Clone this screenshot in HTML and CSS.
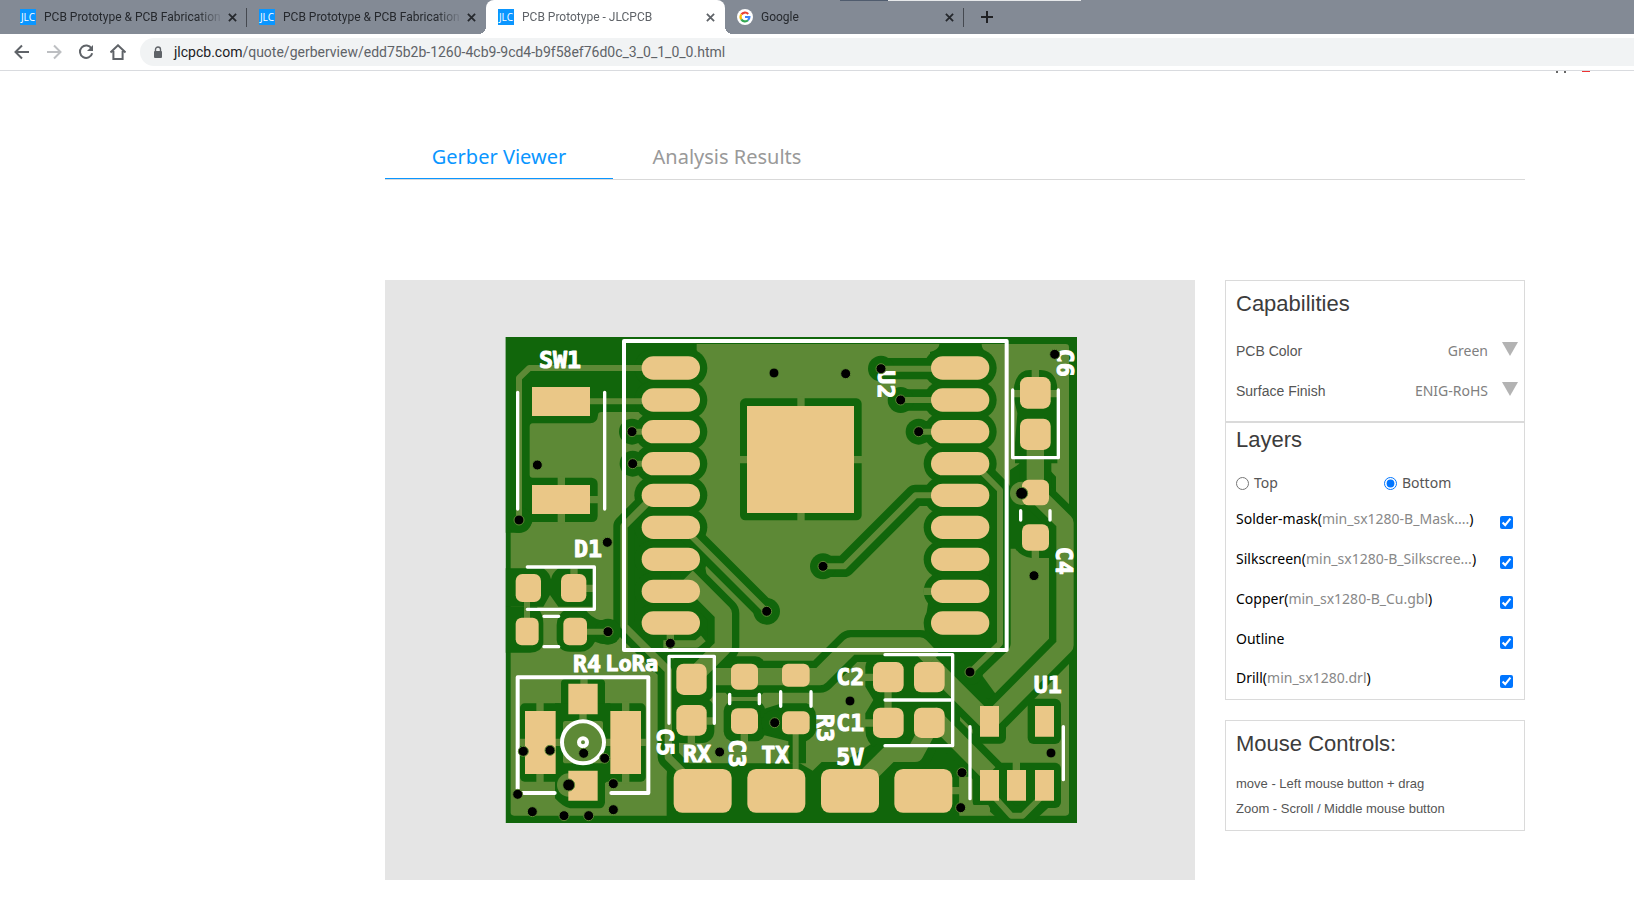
FILE: index.html
```html
<!DOCTYPE html>
<html lang="en">
<head>
<meta charset="utf-8">
<title>PCB Prototype - JLCPCB</title>
<link rel="stylesheet" href="styles.css">
</head>
<body>
<header class="browser">
  <div class="window-strip"></div>
  <nav class="tabstrip">
    <div class="tab"><span class="favicon">JLC</span><span class="tab-title">PCB Prototype &amp; PCB Fabrication</span><button class="tab-close" aria-label="Close tab"><svg viewBox="0 0 10 10"><path d="M1 1l8 8M9 1l-8 8"/></svg></button></div>
    <div class="tab"><span class="favicon">JLC</span><span class="tab-title">PCB Prototype &amp; PCB Fabrication</span><button class="tab-close" aria-label="Close tab"><svg viewBox="0 0 10 10"><path d="M1 1l8 8M9 1l-8 8"/></svg></button></div>
    <div class="tab active"><span class="favicon">JLC</span><span class="tab-title">PCB Prototype - JLCPCB</span><button class="tab-close" aria-label="Close tab"><svg viewBox="0 0 10 10"><path d="M1 1l8 8M9 1l-8 8"/></svg></button></div>
    <div class="tab">
      <svg class="google" viewBox="0 0 16 16"><circle cx="8" cy="8" r="8" fill="#fff"/><g fill="none" stroke-width="2.2"><path d="M4.4 5.4A4.4 4.4 0 0 1 11.2 4.9" stroke="#ea4335"/><path d="M4.3 10.4A4.5 4.5 0 0 1 4.3 5.5" stroke="#fbbc05"/><path d="M11 11.2A4.4 4.4 0 0 1 4.3 10.3" stroke="#34a853"/><path d="M8 8H12.4A4.4 4.4 0 0 1 10.9 11.2" stroke="#4285f4"/></g></svg>
      <span class="tab-title">Google</span><button class="tab-close" aria-label="Close tab"><svg viewBox="0 0 10 10"><path d="M1 1l8 8M9 1l-8 8"/></svg></button></div>
    <button class="new-tab" aria-label="New tab"><svg viewBox="0 0 12 12"><path d="M6 0v12M0 6h12"/></svg></button>
  </nav>
  <div class="toolbar">
    <button class="nav-button" aria-label="Back"><svg viewBox="0 0 16 16"><path d="M15 8H2M8 1.500L1.500 8L8 14.500"/></svg></button>
    <button class="nav-button disabled" aria-label="Forward"><svg viewBox="0 0 16 16"><path d="M1 8h13M8 1.500L14.500 8L8 14.500"/></svg></button>
    <button class="nav-button" aria-label="Reload"><svg viewBox="0 0 16 16"><path d="M13.500 4.500A6.200 6.200 0 1 0 14.200 9.200"/><path d="M15 1v6H9z" class="solid"/></svg></button>
    <button class="nav-button" aria-label="Home"><svg viewBox="0 0 16 16"><path d="M0.500 8.500L8 1.300L15.500 8.500M3.400 7V15H12.600V7"/></svg></button>
    <div class="address">
      <svg class="lock" viewBox="0 0 10 13"><path d="M2.500 6V3.500a2.500 2.500 0 0 1 5 0V6" fill="none" stroke="#5f6368" stroke-width="1.400"/><rect x="1" y="5" width="8" height="7" rx="1" fill="#5f6368"/></svg>
      <span class="url"><span class="host">jlcpcb.com</span>/quote/gerberview/edd75b2b-1260-4cb9-9cd4-b9f58ef76d0c_3_0_1_0_0.html</span>
    </div>
  </div>
</header>
<div class="remnants"><i class="dot"></i><i class="dot"></i><i class="badge"></i></div>

<main class="page">
  <nav class="view-tabs">
    <a class="view-tab current" href="#viewer">Gerber Viewer</a>
    <a class="view-tab" href="#analysis">Analysis Results</a>
  </nav>
  <div class="workspace">
    <section class="viewer" id="viewer">
      <svg class="board" viewBox="-345 -150 2430 1800" role="img" aria-label="Bottom side of the board">
        <defs>
          <g id="pad"><path d="M35 0H140"/></g>
          <clipPath id="edge"><rect x="17" y="21" width="1714" height="1458"/></clipPath>
        </defs>
        <g clip-path="url(#edge)">
          <rect class="mask" x="16" y="20" width="1716" height="1460"/>
          <rect class="copper" x="32" y="42" width="1675" height="1415" rx="10"/>

          <!-- clearance areas -->
          <g class="mask">
            <path d="M16 20H590V246H305Q294 246 294 256Q292 280 270 280H98Q89 281 89 290V434Q89 443 98 443H275Q293 445 293 462V558Q292 576 275 576H97Q84 608 50 608H16Z"/>
            <path d="M580 20V50Q580 60 592 62V90H480V20Z"/>
            <path d="M1318 20V44Q1316 58 1290 66V110H1460V66Q1446 58 1445 44V20Z"/>
            <path d="M385 560H600V620L645 880V940L600 985H460L385 900Z"/>
            <path d="M1330 520H1510V950L1410 1050L1450 1100L1385 1120L1270 960L1275 880Z"/>
            <rect x="720" y="205" width="365" height="366" rx="16"/>
            <path d="M1540 200Q1540 120 1590 120H1622Q1672 122 1672 180V400H1545V340L1552 250Z"/>
            <path d="M1530 420L1560 400H1630L1668 440V684H1595Q1562 680 1546 656H1530Z"/>
            <path d="M16 715H130Q150 730 153 748Q156 730 175 715H283V830H175L150 795L130 830H16Z"/>
            <path d="M16 830H110Q130 850 130 880V940Q125 968 90 968H16ZM170 885Q172 850 200 838H255Q275 865 300 870H350V935Q320 950 285 935Q270 965 240 965H210Q175 965 170 930Z"/>
            <rect x="183" y="1048" width="132" height="90" rx="12"/>
            <rect x="60" y="1120" width="130" height="235" rx="14"/>
            <rect x="308" y="1120" width="129" height="235" rx="14"/>
            <path d="M165 1120H331V1345L315 1360V1418Q312 1435 298 1435H210Q190 1432 165 1405Z"/>
            <rect x="507" y="979" width="136" height="138" rx="36"/>
            <rect x="507" y="1103" width="136" height="136" rx="36"/>
            <path d="M507 1010H530V1280H505Z"/>
            <rect x="671" y="979" width="125" height="122" rx="30"/>
            <rect x="671" y="1113" width="125" height="121" rx="30"/>
            <path d="M780 1140L846 1120H920Q948 1130 948 1160V1200Q945 1220 918 1234V1300H865V1234L790 1215Z"/>
            <path d="M502 1300H900L938 1322L965 1296H1030L1140 1225V1200H1370L1440 1290L1378 1340V1480H500V1340Z"/>
            <path d="M1096 1010Q1100 975 1140 974H1380V1260H1130Q1096 1235 1096 1200V1150L1120 1110L1096 1070Z"/>
            <path d="M1380 960L1420 1000L1500 1110L1440 1150L1360 1060Z"/>
            <path d="M1370 1200L1440 1270L1430 1340L1378 1340Z"/>
            <rect x="1418" y="1106" width="100" height="135" rx="18"/>
            <rect x="1583" y="1106" width="100" height="136" rx="18"/>
            <rect x="1418" y="1298" width="265" height="136" rx="18"/>
          </g>

          <!-- rounded clearance around pads and traces -->
          <g class="halo-lines">
            <g class="pad-halo">
              <use href="#pad" x="425" y="114"/><use href="#pad" x="425" y="210"/><use href="#pad" x="425" y="305"/><use href="#pad" x="425" y="401"/><use href="#pad" x="425" y="496"/><use href="#pad" x="425" y="592"/><use href="#pad" x="425" y="688"/><use href="#pad" x="425" y="784"/><use href="#pad" x="425" y="879"/>
              <use href="#pad" x="1293" y="114"/><use href="#pad" x="1293" y="210"/><use href="#pad" x="1293" y="305"/><use href="#pad" x="1293" y="401"/><use href="#pad" x="1293" y="496"/><use href="#pad" x="1293" y="592"/><use href="#pad" x="1293" y="688"/><use href="#pad" x="1293" y="784"/><use href="#pad" x="1293" y="879"/>
            </g>
            <g class="trace-halo">
              <path d="M450 510L372 588V888L505 1021V1282L560 1337"/>
              <path d="M575 619L800 844M396 305H450M398 401H450"/>
              <path d="M1143 116H1310M1202 210H1310M1256 305H1310M1310 496H1246L1033 709H969"/>
              <path d="M1445 425L1500 480V940L1410 1027"/>
              <path d="M1468 1400L1533 1459H1570L1640 1395"/>
            </g>
            <g class="band-halo">
              <path d="M560 740L670 850V950L600 1020M620 1040H960L1052 948H1260L1300 990"/>
              <path d="M1606 380V490L1695 578V946L1468 1175"/>
              <path d="M1300 1012L1468 1180M1290 1150L1468 1330M1288 1190L1250 1270H1170L1100 1340"/>
            </g>
          </g>
          <g class="mask">
            <circle cx="57" cy="570" r="39"/><circle cx="396" cy="305" r="39"/><circle cx="398" cy="401" r="39"/><circle cx="324" cy="905" r="39"/><circle cx="800" cy="844" r="40"/><circle cx="1143" cy="116" r="39"/><circle cx="1202" cy="210" r="39"/><circle cx="1256" cy="305" r="39"/><circle cx="969" cy="709" r="39"/><circle cx="1410" cy="1026" r="39"/><circle cx="824" cy="1178" r="39"/>
          </g>

          <!-- copper traces -->
          <g class="traces">
            <path class="w18" d="M440 114H88L57 144V570M270 214H440M81 800V880"/>
            <path d="M184 440V470M184 548V580M265 509H297"/>
            <path d="M450 510L372 588V888L505 1021V1282L560 1337"/>
            <path class="w18" d="M575 619L800 844M396 305H450M398 401H450M255 905H324M887 1200V1330"/>
            <path class="w18" d="M1143 116H1310M1202 210H1310M1256 305H1310M1310 496H1246L1033 709H969"/>
            <path class="w18" d="M1445 425L1500 480V940L1410 1027"/>
            <path d="M716 389H745M1058 389H1090M903 200V230M903 545V575"/>
            <path d="M1606 118V150M1536 191H1565M1645 191H1680M1606 650V690M1270 784H1300"/>
            <path class="band" d="M560 740L670 850V950L600 1020M640 1040H960L1052 948H1260L1300 990"/>
            <path class="band" d="M1606 350V490L1695 578V946L1468 1175"/>
            <path class="band" d="M1288 1000L1468 1180M1290 1150L1468 1330M1288 1190L1245 1270H1170L1100 1340"/>
            <path d="M1090 1042H1125M1090 1179H1125M1164 1080V1140M1350 1382H1388M1549 1290V1330"/>
            <path class="w18" d="M1478 1395L1534 1457H1568L1630 1395"/>
            <path d="M222 708V740M255 775H290M511 910V940M490 942H590L610 925"/>
            <path d="M620 1173H650M574 1210V1245M733 1200V1245"/>
            <path d="M120 1115V1150M120 1330V1360M377 1115V1150M377 1330V1360M252 1045V1070M249 1150V1185M165 1237H195M305 1237H335M56 1237H80M420 1237H442"/>
          </g>
          <g class="copper">
            <rect x="189" y="1173" width="120" height="127" rx="6"/>
            <circle cx="206" cy="1365" r="35"/><circle cx="1565" cy="490" r="35"/>
            <path d="M1378 1345Q1378 1328 1395 1328Q1402 1340 1402 1425H1465Q1476 1440 1465 1456H1385Q1378 1456 1378 1448Z"/>
          </g>

          <!-- exposed pads -->
          <g class="castellated">
            <use href="#pad" x="425" y="114"/><use href="#pad" x="425" y="210"/><use href="#pad" x="425" y="305"/><use href="#pad" x="425" y="401"/><use href="#pad" x="425" y="496"/><use href="#pad" x="425" y="592"/><use href="#pad" x="425" y="688"/><use href="#pad" x="425" y="784"/><use href="#pad" x="425" y="879"/>
            <use href="#pad" x="1293" y="114"/><use href="#pad" x="1293" y="210"/><use href="#pad" x="1293" y="305"/><use href="#pad" x="1293" y="401"/><use href="#pad" x="1293" y="496"/><use href="#pad" x="1293" y="592"/><use href="#pad" x="1293" y="688"/><use href="#pad" x="1293" y="784"/><use href="#pad" x="1293" y="879"/>
          </g>
          <g class="gold">
            <path d="M741 228H1062V549H741ZM96 171H270V258H96ZM96 465H270V552H96Z"/>
            <path d="M205 1061H293V1153H205ZM75 1143H167V1332H75ZM331 1143H423V1332H331ZM205 1322H293V1412H205Z"/>
            <path d="M1440 1128H1497V1220H1440ZM1605 1128H1662V1220H1605ZM1440 1320H1497V1412H1440ZM1521 1320H1578V1412H1521ZM1605 1320H1662V1412H1605Z"/>
            <rect x="1560" y="141" width="92" height="95" rx="22"/><rect x="1560" y="266" width="92" height="94" rx="22"/>
            <rect x="1566" y="449" width="81" height="77" rx="20"/><rect x="1566" y="583" width="81" height="79" rx="20"/>
            <rect x="47" y="732" width="76" height="84" rx="20"/><rect x="183" y="732" width="76" height="84" rx="20"/>
            <rect x="47" y="863" width="69" height="83" rx="18"/><rect x="190" y="863" width="71" height="83" rx="18"/>
            <rect x="529" y="1001" width="91" height="94" rx="22"/><rect x="529" y="1125" width="91" height="92" rx="22"/>
            <rect x="693" y="1001" width="81" height="78" rx="20"/><rect x="693" y="1135" width="81" height="77" rx="20"/>
            <rect x="846" y="1001" width="83" height="69" rx="18"/><rect x="846" y="1144" width="83" height="69" rx="18"/>
            <rect x="1119" y="996" width="92" height="91" rx="22"/><rect x="1242" y="996" width="92" height="91" rx="22"/>
            <rect x="1119" y="1133" width="92" height="91" rx="22"/><rect x="1242" y="1133" width="92" height="91" rx="22"/>
            <rect x="521" y="1317" width="174" height="131" rx="26"/><rect x="742" y="1317" width="174" height="131" rx="26"/><rect x="963" y="1317" width="174" height="131" rx="26"/><rect x="1183" y="1317" width="174" height="131" rx="26"/>
          </g>

          <!-- silkscreen -->
          <g class="silk">
            <path class="thick" d="M372 33H1520V960H372Z"/>
            <path d="M53 187V537M314 187V537M82 711H283V838H82M132 859H176M132 950H176"/>
            <path class="thick" d="M164 1389H53V1042H445V1389H334"/>
            <circle class="thick" cx="249" cy="1237" r="63"/><circle class="thick" cx="249" cy="1237" r="12"/>
            <path d="M507 1180V979H643V1180M689 1093V1121M778 1093V1121M842 1085V1129M933 1085V1129"/>
            <path d="M1155 974H1358V1247H1155M1155 1110H1358M1538 180V383H1675V180M1562 542V570M1650 542V570M1410 1190V1406M1690 1190V1349"/>
          </g>
          <g class="legend">
            <text x="117" y="115">SW1</text><text x="222" y="681">D1</text><text x="219" y="1027">R4</text><text class="name" x="316" y="1022">LoRa</text>
            <text x="549" y="1297">RX</text><text x="784" y="1300">TX</text><text x="1009" y="1306">5V</text><text x="1009" y="1066">C2</text><text x="1009" y="1203">C1</text><text x="1601" y="1088">U1</text>
            <text transform="translate(1133 121) rotate(90)">U2</text><text transform="translate(1670 56) rotate(90)">C6</text><text transform="translate(1668 650) rotate(90)">C4</text>
            <text transform="translate(471 1194) rotate(90)">C5</text><text transform="translate(686 1228) rotate(90)">C3</text><text transform="translate(951 1152) rotate(90)">R3</text>
          </g>

          <!-- drill holes -->
          <g class="holes">
            <circle cx="822" cy="129" r="15"/><circle cx="396" cy="305" r="15"/><circle cx="398" cy="401" r="15"/><circle cx="112" cy="405" r="15"/><circle cx="57" cy="570" r="15"/><circle cx="322" cy="637" r="15"/>
            <circle cx="1037" cy="131" r="15"/><circle cx="1143" cy="116" r="15"/><circle cx="1202" cy="210" r="15"/><circle cx="1256" cy="305" r="15"/><circle cx="969" cy="709" r="15"/><circle cx="1664" cy="73" r="15"/><circle cx="1565" cy="490" r="18"/><circle cx="1602" cy="737" r="15"/>
            <circle cx="1050" cy="1113" r="15"/><circle cx="1410" cy="1026" r="15"/><circle cx="1653" cy="1269" r="15"/><circle cx="1386" cy="1328" r="15"/><circle cx="1382" cy="1433" r="15"/>
            <circle cx="70" cy="1264" r="15"/><circle cx="150" cy="1261" r="15"/><circle cx="251" cy="1270" r="15"/><circle cx="314" cy="1285" r="15"/><circle cx="206" cy="1365" r="18"/><circle cx="53" cy="1393" r="15"/><circle cx="340" cy="1361" r="15"/><circle cx="340" cy="1439" r="15"/><circle cx="97" cy="1445" r="15"/><circle cx="192" cy="1457" r="15"/><circle cx="266" cy="1457" r="15"/>
            <circle cx="659" cy="1266" r="15"/><circle cx="824" cy="1178" r="15"/><circle cx="511" cy="940" r="15"/><circle cx="324" cy="905" r="15"/><circle cx="800" cy="844" r="15"/>
          </g>
        </g>
      </svg>
    </section>

    <aside class="sidebar">
      <section class="panel">
        <h2>Capabilities</h2>
        <div class="option"><label for="color">PCB Color</label><select id="color"><option>Green</option></select></div>
        <div class="option"><label for="finish">Surface Finish</label><select id="finish"><option>ENIG-RoHS</option></select></div>
      </section>
      <section class="panel layers">
        <h2>Layers</h2>
        <div class="sides">
          <label class="side"><input type="radio" name="side">Top</label>
          <label class="side"><input type="radio" name="side" checked>Bottom</label>
        </div>
        <div class="layer"><label for="mask">Solder-mask(<span class="file">min_sx1280-B_Mask....</span>)</label><input type="checkbox" id="mask" checked></div>
        <div class="layer"><label for="silk">Silkscreen(<span class="file">min_sx1280-B_Silkscree...</span>)</label><input type="checkbox" id="silk" checked></div>
        <div class="layer"><label for="copper">Copper(<span class="file">min_sx1280-B_Cu.gbl</span>)</label><input type="checkbox" id="copper" checked></div>
        <div class="layer"><label for="outline">Outline</label><input type="checkbox" id="outline" checked></div>
        <div class="layer"><label for="drill">Drill(<span class="file">min_sx1280.drl</span>)</label><input type="checkbox" id="drill" checked></div>
      </section>
      <section class="panel mouse">
        <h2>Mouse Controls:</h2>
        <p>move - Left mouse button + drag</p>
        <p>Zoom - Scroll / Middle mouse button</p>
      </section>
    </aside>
  </div>
</main>
</body>
</html>
```
FILE: styles.css
```css
* { box-sizing: border-box; }
body { margin: 0; background: #fff; font-family: "Noto Sans", "Open Sans", sans-serif; overflow: hidden; }
button { border: 0; padding: 0; background: none; display: flex; align-items: center; justify-content: center; }
button svg { fill: none; stroke: currentColor; stroke-width: 2; }

/* browser chrome */
.browser { position: relative; border-bottom: 1px solid #d9dbdf; }
.window-strip { position: absolute; top: 0; left: 840px; width: 241px; height: 1px; background: linear-gradient(90deg, #505c6e 48px, #e6e8ea 48px); }
.tabstrip { display: flex; height: 34px; padding-left: 8px; background: #838a95; }
.tab { position: relative; display: flex; align-items: center; width: 239px; padding: 0 8px 0 12px; color: #25282d; font-size: 12px; }
.tab:not(.active)::after { content: ""; position: absolute; right: 0; top: 8px; width: 1px; height: 19px; background: #454950; }
.tab:nth-child(2)::after { display: none; }
.tab.active { background: #fff; border-radius: 8px 8px 0 0; color: #5f6368; }
.tab.active::before, .tab.active::after { content: ""; position: absolute; bottom: 0; width: 8px; height: 8px; }
.tab.active::before { left: -8px; background: radial-gradient(circle at 0 0, #838a95 8px, #fff 8px); }
.tab.active::after { right: -8px; background: radial-gradient(circle at 100% 0, #838a95 8px, #fff 8px); }
.favicon { width: 16px; height: 16px; flex: none; background: #0a96ff; color: #fff; font: 10px/16px "Open Sans", sans-serif; text-align: center; overflow: hidden; }
.google { width: 16px; height: 16px; flex: none; }
.tab-title { flex: 1; min-width: 0; margin-left: 8px; overflow: hidden; white-space: nowrap; font-family: Roboto, sans-serif; font-size: 12px; line-height: 16px; mask-image: linear-gradient(90deg, #000 85%, transparent); }
.tab-close { width: 14px; height: 16px; margin-left: 1px; color: inherit; }
.tab-close svg { width: 9px; height: 9px; stroke-width: 2; }
.new-tab { width: 28px; margin-left: 9px; color: #202124; }
.new-tab svg { width: 12px; height: 12px; }
.toolbar { display: flex; align-items: center; gap: 16px; height: 36px; padding-left: 14px; background: #fff; }
.nav-button { width: 16px; height: 16px; color: #5f6368; }
.nav-button svg { width: 16px; height: 16px; }
.nav-button .solid { fill: currentColor; stroke: none; }
.nav-button.disabled { color: #bdbfc2; }
.address { flex: 1; display: flex; align-items: center; height: 28px; padding-left: 13px; margin-left: -2px; border-radius: 14px 0 0 14px; background: #f1f3f4; }
.lock { width: 10px; height: 13px; }
.url { margin-left: 11px; font-family: Roboto, sans-serif; font-size: 14px; line-height: 20px; color: #5f6368; white-space: nowrap; }
.host { color: #202124; }
.remnants { display: flex; height: 2px; gap: 6px; justify-content: flex-end; padding-right: 44px; }
.dot { width: 2px; height: 2px; background: #666; }
.badge { width: 8px; height: 1px; margin-left: 10px; background: #e33; }

/* page */
.page { padding: 56px 109px 32px 385px; }
.view-tabs { display: flex; border-bottom: 1px solid #d9d9d9; }
.view-tab { width: 228px; height: 50px; text-align: center; text-decoration: none; font-size: 20px; line-height: 56px; color: #999; }
.view-tab.current { color: #0a96ff; border-bottom: 1px solid #0a96ff; }
.workspace { display: flex; align-items: flex-start; gap: 30px; margin-top: 100px; }
.viewer { flex: 1; background: #e5e5e5; }
.board { display: block; width: 100%; height: auto; }

.mask { fill: #11660b; }
.copper { fill: #5d8936; }
.gold { fill: #eac787; }
.halo-lines { fill: none; stroke: #11660b; stroke-linecap: round; stroke-linejoin: round; }
.pad-halo { stroke-width: 114px; }
.trace-halo { stroke-width: 64px; }
.band-halo { stroke-width: 96px; }
.traces { fill: none; stroke: #5d8936; stroke-width: 22px; stroke-linejoin: round; }
.w18 { stroke-width: 18px; }
.band { stroke-width: 52px; }
.castellated { fill: none; stroke: #eac787; stroke-width: 70px; stroke-linecap: round; }
.silk { fill: none; stroke: #fff; stroke-width: 10px; stroke-linecap: round; stroke-linejoin: round; }
.silk .thick { stroke-width: 12px; }
.legend { fill: #fff; stroke: #fff; stroke-width: 3px; stroke-linejoin: round; font-family: "DejaVu Sans Mono", monospace; font-size: 70px; font-weight: 700; }
.legend .name { font-size: 66px; }
.holes { fill: #000; stroke: #5d8936; stroke-width: 3px; }

/* sidebar */
.sidebar { width: 300px; flex: none; }
.panel { border: 1px solid #dadada; padding: 9px 10px 10px; }
.panel h2 { margin: 0; font: 400 22px/28px "Liberation Sans", Arial, sans-serif; color: #3c3c3c; }
.option { display: flex; align-items: center; justify-content: space-between; position: relative; height: 40px; font: 14px/20px "Liberation Sans", Arial, sans-serif; color: #555; }
.panel h2 + .option { margin-top: 13px; }
.option select { appearance: none; border: 0; margin: 0; padding: 0 26px 0 0; width: 160px; height: 24px; background: none; color: #808080; font: 14px/20px "Noto Sans", sans-serif; text-align: right; text-align-last: right; }
.option::after { content: ""; position: absolute; right: -4px; top: 11px; border: 8px solid transparent; border-top: 14px solid #b3b3b3; border-bottom: 0; pointer-events: none; }
.layers { padding: 3px 10px 0; }
.sides { display: flex; height: 36px; margin-top: 11px; align-items: center; }
.side { display: flex; align-items: center; font-size: 14px; line-height: 20px; color: #555; }
.side:first-child { width: 148px; }
.side input { width: 13px; height: 13px; margin: 0 5px 0 0; }
.layer { display: flex; align-items: center; justify-content: space-between; height: 40px; padding-right: 1px; padding-bottom: 4px; font-size: 14px; line-height: 20px; color: #000; white-space: nowrap; }
.layer:last-child { height: 38px; }
.layer input { width: 13px; height: 13px; margin: 6px 0 0; }
.file { color: #888; }
.mouse { margin-top: 20px; padding-bottom: 9px; }
.mouse p { margin: 0; font: 13px/25px "Liberation Sans", Arial, sans-serif; color: #555; }
.mouse h2 + p { margin-top: 13px; }
```
